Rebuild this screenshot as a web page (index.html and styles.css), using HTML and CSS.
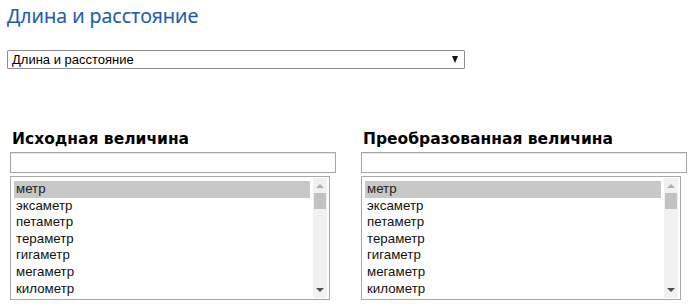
FILE: index.html
```html
<!DOCTYPE html>
<html lang="ru">
<head>
<meta charset="utf-8">
<link rel="stylesheet" href="styles.css">
</head>
<body>
<div class="page">
  <h1 class="title">Длина и расстояние</h1>
  <div class="dropdown">
    <span class="dropdown-text">Длина и расстояние</span>
    <span class="dropdown-arrow"></span>
  </div>
  <div class="columns">
    <div class="col">
      <h2 class="col-title">Исходная величина</h2>
      <div class="field"></div>
      <div class="listbox">
        <ul class="options">
          <li class="option selected">метр</li>
          <li class="option">эксаметр</li>
          <li class="option">петаметр</li>
          <li class="option">тераметр</li>
          <li class="option">гигаметр</li>
          <li class="option">мегаметр</li>
          <li class="option">километр</li>
        </ul>
        <div class="scrollbar">
          <span class="arrow-up"></span>
          <span class="thumb"></span>
          <span class="track"></span>
          <span class="arrow-down"></span>
        </div>
      </div>
    </div>
    <div class="col">
      <h2 class="col-title">Преобразованная величина</h2>
      <div class="field"></div>
      <div class="listbox">
        <ul class="options">
          <li class="option selected">метр</li>
          <li class="option">эксаметр</li>
          <li class="option">петаметр</li>
          <li class="option">тераметр</li>
          <li class="option">гигаметр</li>
          <li class="option">мегаметр</li>
          <li class="option">километр</li>
        </ul>
        <div class="scrollbar">
          <span class="arrow-up"></span>
          <span class="thumb"></span>
          <span class="track"></span>
          <span class="arrow-down"></span>
        </div>
      </div>
    </div>
  </div>
</div>
</body>
</html>
```
FILE: styles.css
```css
* { box-sizing: border-box; }
html, body { margin: 0; padding: 0; background: #fff; }
body { font-family: "Liberation Sans", Arial, sans-serif; color: #000; }

.page { padding: 3px 0 0 7px; }

.title {
  margin: 0;
  font-family: "Open Sans", "Noto Sans", sans-serif;
  font-weight: 400;
  font-size: 19.5px;
  line-height: 26px;
  color: #1c5ca8;
  -webkit-text-stroke: 0.2px #1c5ca8;
}

.dropdown {
  margin-top: 21px;
  width: 458px;
  height: 19px;
  border: 1px solid #8f8f8f;
  border-radius: 1px;
  display: flex;
  align-items: center;
  justify-content: space-between;
  padding: 0 6px 0 4px;
  font-size: 13px;
}
.dropdown-text { line-height: 17px; }
.dropdown-arrow {
  width: 0; height: 0;
  border-left: 3.5px solid transparent;
  border-right: 3.5px solid transparent;
  border-top: 7px solid #111;
}

.columns {
  display: flex;
  gap: 24px;
  margin-top: 59px;
  padding-left: 3px;
}
.col { width: 327px; display: flex; flex-direction: column; }

.col-title {
  margin: 0 0 2px 2px;
  font-family: "DejaVu Sans", Verdana, sans-serif;
  font-weight: 700;
  font-size: 15.5px;
  line-height: 22px;
}

.field {
  width: 326px;
  height: 21px;
  border: 1px solid #a6a6a6;
  box-shadow: inset 0 1px 1px #e4e4e4;
  background: #fff;
}

.listbox {
  margin-top: 3px;
  width: 320px;
  height: 124px;
  border: 1px solid #a9a9a9;
  display: flex;
  padding: 4px 2px 0 3px;
  overflow: hidden;
}
.options {
  list-style: none;
  margin: 0;
  padding: 0;
  flex: 1;
}
.option {
  height: 16.6px;
  line-height: 16.6px;
  padding-left: 2px;
  font-size: 13.3px;
  color: #111;
}
.option.selected { background: #c8c8c8; color: #222; }

.scrollbar {
  width: 14px;
  margin-left: 3px;
  margin-top: -3px;
  height: 120px;
  background: #f1f1f1;
  display: flex;
  flex-direction: column;
  align-items: center;
}
.arrow-up {
  margin-top: 6px;
  width: 0; height: 0;
  border-left: 4px solid transparent;
  border-right: 4px solid transparent;
  border-bottom: 4px solid #b0b0b0;
}
.thumb {
  margin-top: 5px;
  width: 12px;
  height: 16px;
  background: #c2c2c2;
}
.track { flex: 1; }
.arrow-down {
  margin-bottom: 6px;
  width: 0; height: 0;
  border-left: 4px solid transparent;
  border-right: 4px solid transparent;
  border-top: 4px solid #505050;
}
```
